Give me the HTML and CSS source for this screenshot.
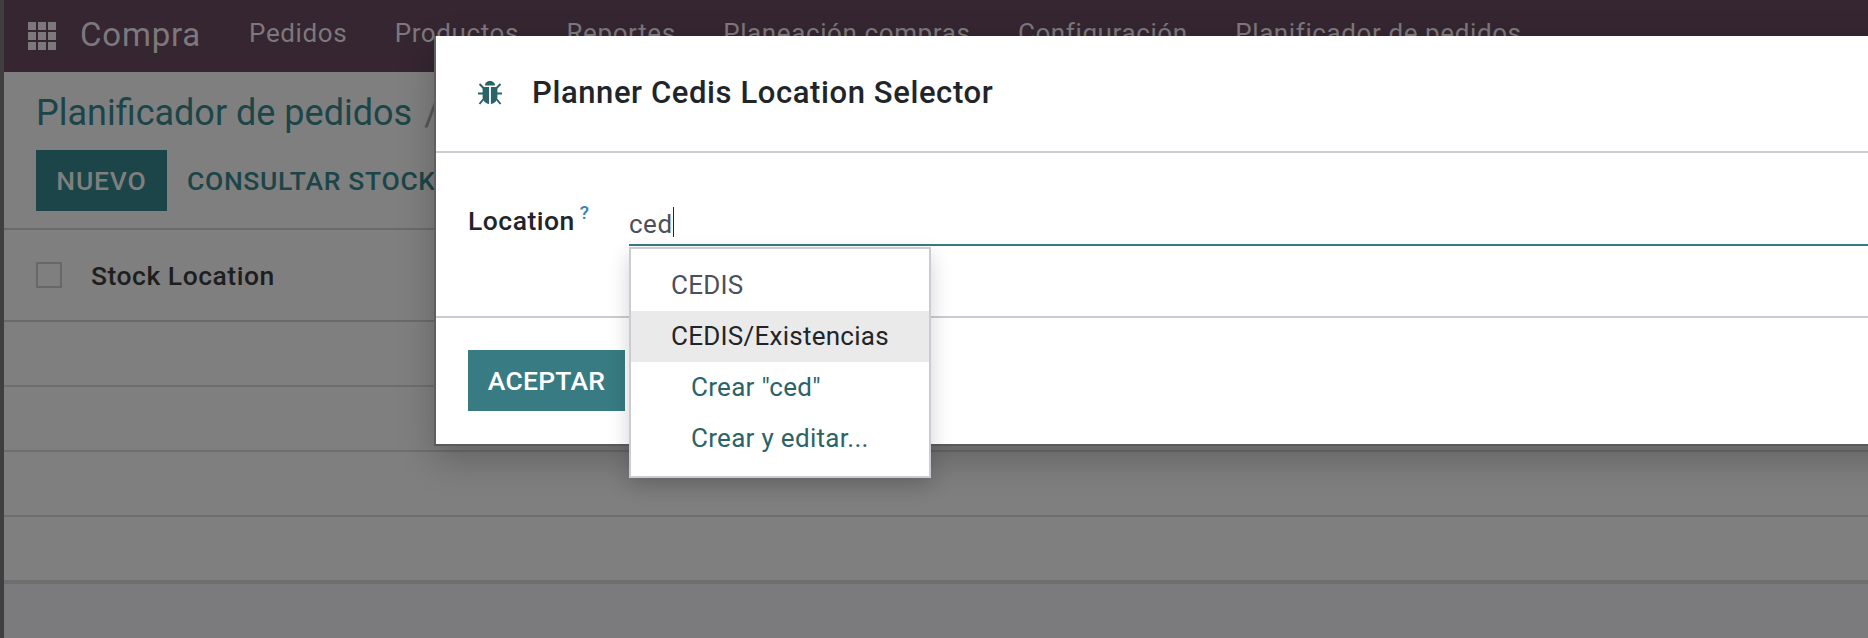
FILE: index.html
```html
<!DOCTYPE html>
<html lang="es">
<head>
<meta charset="utf-8">
<title>Planificador de pedidos</title>
<link rel="stylesheet" href="styles.css">
</head>
<body>
<div class="page">
  <aside class="edge"></aside>
  <div class="app">
    <nav class="navbar">
      <svg class="apps" viewBox="0 0 28 28" aria-hidden="true">
        <g fill="#7d787c">
          <rect x="0" y="0" width="8" height="8"/><rect x="10" y="0" width="8" height="8"/><rect x="20" y="0" width="8" height="8"/>
          <rect x="0" y="10" width="8" height="8"/><rect x="10" y="10" width="8" height="8"/><rect x="20" y="10" width="8" height="8"/>
          <rect x="0" y="20" width="8" height="8"/><rect x="10" y="20" width="8" height="8"/><rect x="20" y="20" width="8" height="8"/>
        </g>
      </svg>
      <span class="brand">Compra</span>
      <span class="menu">Pedidos</span>
      <span class="menu">Productos</span>
      <span class="menu">Reportes</span>
      <span class="menu">Planeación compras</span>
      <span class="menu">Configuración</span>
      <span class="menu">Planificador de pedidos</span>
    </nav>
    <div class="control">
      <div class="crumbs"><span class="crumb">Planificador de pedidos</span><span class="slash">/</span></div>
      <div class="actions">
        <span class="btn btn-dim">NUEVO</span>
        <span class="link-btn">CONSULTAR STOCK</span>
      </div>
    </div>
    <div class="list-head">
      <span class="check"></span>
      <span class="col">Stock Location</span>
    </div>
    <div class="row"></div>
    <div class="row"></div>
    <div class="row"></div>
    <div class="row last"></div>
  </div>
  <section class="modal">
    <header class="modal-head">
      <svg class="bug" viewBox="0 0 24 24" aria-hidden="true">
        <path d="M7 4.4C7 1.8 9.2 0 12 0s5 1.8 5 4.4z" fill="#2a6468"/>
        <path d="M4.6 6h6.5v17C7.4 22.7 4.6 19.8 4.6 15.6zM12.9 6h6.5v9.6c0 4.2-2.8 7.1-6.5 7.400z" fill="#2a6468"/>
        <path d="M1.5 3l4 4M22.5 3l-4 4M0 12.5h5M24 12.5h-5M1.5 23l4-5M22.500 23l-4-5" stroke="#2a6468" stroke-width="2" fill="none"/>
      </svg>
      <h1 class="modal-title">Planner Cedis Location Selector</h1>
    </header>
    <div class="modal-body">
      <label class="field-label">Location<sup class="hint">?</sup></label>
      <div class="field">
        <div class="input"><span>ced</span><i class="caret"></i></div>
        <ul class="dropdown">
          <li class="opt">CEDIS</li>
          <li class="opt active">CEDIS/Existencias</li>
          <li class="opt create">Crear "ced"</li>
          <li class="opt create">Crear y editar...</li>
        </ul>
      </div>
    </div>
    <footer class="modal-foot">
      <span class="btn btn-primary">ACEPTAR</span>
    </footer>
  </section>
</div>
</body>
</html>
```
FILE: styles.css
```css
* { box-sizing: border-box; }
html, body { margin: 0; padding: 0; height: 100%; }
body { font-family: Roboto, "Liberation Sans", sans-serif; background: #7b7b7d; overflow: hidden; }
.page { position: relative; display: flex; width: 1868px; height: 638px; overflow: hidden; }
.edge { width: 4px; flex: none; background: #3f3f3f; }
.app { flex: 1; min-width: 0; }

.navbar { height: 72px; background: #352631; display: flex; align-items: center; padding-left: 24px; color: #7d787c; }
.apps { width: 28px; height: 28px; flex: none; margin-right: 24px; }
.brand { font-size: 33px; letter-spacing: .8px; margin-right: 48px; padding-bottom: 4px; }
.menu { font-size: 26px; letter-spacing: .6px; margin-right: 47.5px; white-space: nowrap; padding-bottom: 6px; }

.control { background: #7f7f7f; height: 158px; border-bottom: 2px solid #6a6a6a; padding: 20px 32px 0; }
.crumbs { height: 42px; font-size: 36px; line-height: 42px; color: #1b4548; white-space: nowrap; }
.slash { color: #555; margin-left: 12px; }
.actions { display: flex; align-items: center; margin-top: 16px; }
.btn { display: inline-flex; align-items: center; justify-content: center; height: 61px; font-size: 26.5px; font-weight: 500; }
.btn-dim { width: 131px; background: #1b4548; color: #7f7f7f; letter-spacing: .8px; }
.link-btn { margin-left: 20px; font-size: 26.5px; letter-spacing: .67px; font-weight: 500; color: #1b4548; white-space: nowrap; }

.list-head { height: 92px; background: #7f7f7f; border-bottom: 2px solid #6a6a6a; display: flex; align-items: center; padding-left: 32px; }
.check { width: 26px; height: 26px; border: 2px solid #686868; flex: none; margin-right: 29px; }
.col { font-size: 26.5px; letter-spacing: .5px; font-weight: 500; color: #1e1e1e; }
.row { height: 65px; background: #7f7f7f; border-bottom: 2px solid #6e6e6e; }
.row.last { height: 67px; border-bottom-width: 4px; }

.modal { position: absolute; left: 434px; top: 36px; width: 1500px; height: 410px; background: #fff; border-left: 2px solid #5f5f5f; border-bottom: 2px solid #5a5a5a; box-shadow: 0 14px 34px rgba(0,0,0,.22); }
.modal-head { height: 117px; border-bottom: 2px solid #cbcbd1; display: flex; align-items: center; padding-left: 42px; padding-bottom: 2px; }
.bug { width: 24px; height: 24px; flex: none; margin-right: 30px; }
.modal-title { margin: 0; font-size: 31px; letter-spacing: .6px; font-weight: 500; color: #212529; white-space: nowrap; }
.modal-body { height: 165px; border-bottom: 2px solid #cbcbd1; display: flex; padding-left: 32px; padding-top: 48px; }
.field-label { width: 161px; flex: none; font-size: 26.5px; letter-spacing: .5px; font-weight: 500; color: #212529; line-height: 40px; white-space: nowrap; }
.hint { font-size: 19px; font-weight: 500; color: #3a85a8; margin-left: 5px; position: relative; top: -1px; vertical-align: super; line-height: 0; letter-spacing: 0; }
.field { position: relative; flex: 1; }
.input { height: 45px; border-bottom: 2px solid #387b82; font-size: 26px; letter-spacing: .5px; color: #4c4f5a; line-height: 46px; display: flex; align-items: flex-start; }
.caret { width: 1.5px; height: 30px; background: #212529; margin-top: 6px; }
.dropdown { position: absolute; left: 0; top: 46px; width: 302px; height: 231px; margin: 0; padding: 11px 0 0; list-style: none; background: #fff; border: 2px solid #cbcbd1; box-shadow: 0 8px 20px rgba(0,0,0,.18); z-index: 2; }
.opt { height: 51px; line-height: 51px; padding-left: 40px; font-size: 26px; letter-spacing: .25px; color: #4c4f5a; white-space: nowrap; }
.opt.active { background: #eaeaea; color: #212529; }
.opt.create { padding-left: 60px; color: #2a6468; letter-spacing: .3px; }
.modal-foot { padding: 32px 0 0 32px; }
.btn-primary { width: 157px; background: #387b82; color: #fff; letter-spacing: .24px; }
```
